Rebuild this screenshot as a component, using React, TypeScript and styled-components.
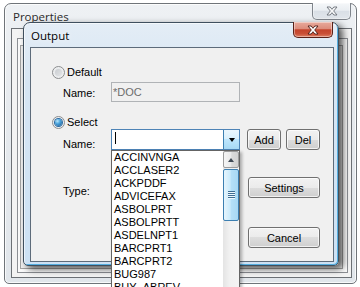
import React from 'react'
import styled, { createGlobalStyle } from 'styled-components'

const GlobalStyle = createGlobalStyle`
  html, body {
    margin: 0;
    padding: 0;
    background: #ffffff;
  }
  body {
    font-family: 'Liberation Sans', Arial, sans-serif;
    font-size: 11px;
    color: #000;
  }
  * {
    box-sizing: border-box;
  }
`

const Desktop = styled.div`
  position: relative;
  width: 360px;
  height: 287px;
  overflow: hidden;
  background: #fff;
`

/* ---------- window chrome ---------- */

const PropertiesWindow = styled.div`
  position: absolute;
  left: 4px;
  top: 3px;
  width: 353px;
  height: 281px;
  display: flex;
  flex-direction: column;
  border: 1px solid #6f7479;
  border-radius: 7px 7px 5px 5px;
  background: linear-gradient(180deg, #eef1f4 0%, #e6eaee 40%, #e1e6eb 100%);
  box-shadow: inset 0 0 0 1px rgba(255, 255, 255, 0.75);
`

const OutputWindow = styled.div`
  position: absolute;
  left: 23px;
  top: 22px;
  width: 316px;
  height: 244px;
  display: flex;
  flex-direction: column;
  border: 1px solid #3f4f5e;
  border-radius: 7px 7px 5px 5px;
  background: linear-gradient(180deg, #e4edf6 0%, #d6e5f3 25%, #cce1f4 100%);
  box-shadow: inset -1px -1px 0 #55aee0, inset 0 0 0 1px rgba(255, 255, 255, 0.6),
    4px 3px 7px rgba(0, 0, 0, 0.65);
  z-index: 2;
`

const TitleBar = styled.div<{ $height: number; $indent: number }>`
  position: relative;
  flex: none;
  height: ${p => p.$height}px;
  padding-left: ${p => p.$indent}px;
  display: flex;
  align-items: center;
`

const Caption = styled.span<{ $dim?: boolean }>`
  font-family: 'Open Sans', 'Noto Sans', sans-serif;
  font-size: 11.5px;
  color: ${p => (p.$dim ? '#2a2a2a' : '#000')};
  text-shadow: 0 0 6px rgba(255, 255, 255, 0.9);
`

const CloseButton = styled.div<{ $active?: boolean }>`
  position: absolute;
  top: -1px;
  right: 5px;
  width: ${p => (p.$active ? 40 : 39)}px;
  height: ${p => (p.$active ? 16 : 17)}px;
  display: flex;
  align-items: center;
  justify-content: center;
  border: 1px solid ${p => (p.$active ? '#5a2118' : '#7f858c')};
  border-top: none;
  border-radius: 0 0 5px 5px;
  background: ${p =>
    p.$active
      ? 'linear-gradient(180deg, #e8aa9c 0%, #dc8d7c 45%, #c4432b 52%, #c94f36 78%, #dd7f63 100%)'
      : 'linear-gradient(180deg, #f5f7f9 0%, #eaeef2 45%, #d9dfe6 52%, #e1e6eb 100%)'};
  box-shadow: inset 0 0 0 1px rgba(255, 255, 255, 0.4);
`

const CloseGlyph: React.FC<{ active?: boolean }> = ({ active }) => (
  <svg width="12" height="10" viewBox="0 0 12 10">
    <path
      d="M1 1h3.2L6 3.3 7.8 1H11L7.7 5 11 9H7.8L6 6.7 4.2 9H1l3.3-4z"
      fill={active ? '#ffffff' : '#f6f7f8'}
      stroke={active ? '#4a1a12' : '#6b7178'}
      strokeWidth="0.9"
      strokeLinejoin="round"
    />
  </svg>
)

/* ---------- properties background window ---------- */

const PropertiesBody = styled.div`
  flex: 1;
  display: flex;
  margin: 0 4px 5px 6px;
  padding: 9px 3px 4px 5px;
  border: 1px solid #6c7075;
  background: #f3f3f3;
`

const TabPanel = styled.div`
  flex: 1;
  display: flex;
  padding: 6px 4px 3px 2px;
  border: 1px solid #8c8f94;
  background: #fafafa;
`

const GroupPanel = styled.div`
  flex: 1;
  border: 1px solid #a3a3a3;
  background: #f0f0f0;
`

/* ---------- output dialog contents ---------- */

const DialogClient = styled.div`
  flex: none;
  height: 215px;
  margin: 0 4px 0 6px;
  display: flex;
  flex-direction: column;
  border: 1px solid #5d6b7a;
  background: #f0f0f0;
`

const OptionRow = styled.div<{ $gap: number }>`
  display: flex;
  align-items: center;
  gap: 2px;
  height: 13px;
  margin-top: ${p => p.$gap}px;
  padding-left: 21px;
  line-height: 13px;
`

const Radio = styled.span<{ $checked?: boolean }>`
  position: relative;
  flex: none;
  width: 13px;
  height: 13px;
  border-radius: 50%;
  border: 1px solid #8b8d8f;
  background: radial-gradient(circle at 50% 50%, #d2d5d9 0, #e6e8ea 45%, #fbfbfb 100%);

  &::after {
    content: '';
    position: absolute;
    left: 2px;
    top: 2px;
    width: 7px;
    height: 7px;
    border-radius: 50%;
    background: ${p =>
      p.$checked
        ? 'radial-gradient(circle at 35% 30%, #b9e7fb 0, #4aa4dd 40%, #15528c 100%)'
        : 'linear-gradient(135deg, #c9ccd0 0%, #e3e5e7 100%)'};
    box-shadow: ${p => (p.$checked ? '0 0 0 1px #2a6aa3' : 'none')};
  }
`

const FieldRow = styled.div<{ $gap: number }>`
  display: flex;
  align-items: flex-start;
  margin-top: ${p => p.$gap}px;
  padding-left: 32px;
`

const FieldLabel = styled.span<{ $drop: number }>`
  flex: none;
  width: 48px;
  line-height: 13px;
  padding-top: ${p => p.$drop}px;
`

const TextBox = styled.div`
  flex: none;
  width: 129px;
  height: 20px;
  display: flex;
  align-items: center;
  padding-left: 1px;
  border: 1px solid #b0b3b6;
  background: #f0f0f0;
  color: #6d6d6d;
`

const Combo = styled.div<{ $open?: boolean }>`
  position: relative;
  flex: none;
  width: 129px;
  height: 21px;
  display: flex;
  border: 1px solid ${p => (p.$open ? '#4d83b6' : '#abadb3')};
  background: #fff;
`

const ComboEdit = styled.div`
  flex: 1;
  padding: 2px 0 0 3px;
`

const Caret = styled.span`
  display: block;
  width: 1px;
  height: 12px;
  background: #000;
`

const DropButton = styled.div<{ $hot?: boolean }>`
  flex: none;
  width: 16px;
  display: flex;
  align-items: center;
  justify-content: center;
  border-left: 1px solid ${p => (p.$hot ? '#3c7fb1' : '#e3e3e3')};
  background: ${p =>
    p.$hot
      ? 'linear-gradient(180deg, #eaf6fd 0%, #d9f0fc 45%, #bee6fd 50%, #a7d9f5 100%)'
      : 'linear-gradient(180deg, #f2f2f2 0%, #ebebeb 50%, #dddddd 50%, #cfcfcf 100%)'};
`

const DownArrow = styled.span`
  width: 0;
  height: 0;
  border-left: 3.5px solid transparent;
  border-right: 3.5px solid transparent;
  border-top: 4px solid #000;
`

const DropList = styled.div`
  position: absolute;
  left: -1px;
  top: 20px;
  width: 129px;
  height: 150px;
  display: flex;
  border: 1px solid #646464;
  background: #fff;
  box-shadow: 2px 2px 3px rgba(0, 0, 0, 0.3);
  z-index: 5;
`

const ListItems = styled.ul`
  flex: 1;
  margin: 0;
  padding: 0;
  list-style: none;
  overflow: hidden;
`

const ListItem = styled.li`
  height: 13px;
  line-height: 13px;
  padding-left: 2px;
  white-space: nowrap;
`

const ScrollTrack = styled.div`
  flex: none;
  width: 16px;
  display: flex;
  flex-direction: column;
  background: linear-gradient(90deg, #e4e4e4 0%, #f1f1f1 40%, #f4f4f4 100%);
`

const ScrollArrow = styled.div`
  flex: none;
  height: 17px;
  display: flex;
  align-items: center;
  justify-content: center;
  border: 1px solid #9c9c9c;
  border-radius: 2px;
  background: linear-gradient(90deg, #f5f5f5 0%, #eaeaea 50%, #dadada 55%, #d2d2d2 100%);
`

const UpArrow = styled.span`
  width: 0;
  height: 0;
  border-left: 3.5px solid transparent;
  border-right: 3.5px solid transparent;
  border-bottom: 4px solid #404a55;
`

const ScrollThumb = styled.div`
  flex: none;
  height: 52px;
  margin-top: 1px;
  display: flex;
  align-items: center;
  justify-content: center;
  border: 1px solid #3c7fb1;
  border-radius: 2px;
  background: linear-gradient(90deg, #e6f5fd 0%, #c9eafb 45%, #b5e0f8 50%, #a7d8f4 100%);
`

const Grip = styled.span`
  width: 7px;
  height: 8px;
  background: repeating-linear-gradient(180deg, #3e6d93 0 1px, #eef8fd 1px 2px);
`

const ActionRow = styled.div<{ $gap: number }>`
  display: flex;
  align-items: flex-start;
  justify-content: flex-end;
  margin-top: ${p => p.$gap}px;
  padding-right: 13px;
`

const PushButton = styled.button<{ $width: number; $space?: number }>`
  flex: none;
  width: ${p => p.$width}px;
  height: 21px;
  margin-left: ${p => p.$space ?? 0}px;
  padding: 0;
  font-family: 'Liberation Sans', Arial, sans-serif;
  font-size: 11px;
  color: #000;
  border: 1px solid #707070;
  border-radius: 3px;
  background: linear-gradient(180deg, #f2f2f2 0%, #ebebeb 50%, #dddddd 50%, #cfcfcf 100%);
  box-shadow: inset 0 0 0 1px rgba(255, 255, 255, 0.7);
`

const printers = [
  'ACCINVNGA',
  'ACCLASER2',
  'ACKPDDF',
  'ADVICEFAX',
  'ASBOLPRT',
  'ASBOLPRTT',
  'ASDELNPT1',
  'BARCPRT1',
  'BARCPRT2',
  'BUG987',
  'BUY_ABREV',
]

const App: React.FC = () => {
  return (
    <Desktop>
      <GlobalStyle />
      <PropertiesWindow>
        <TitleBar $height={24} $indent={8}>
          <Caption $dim>Properties</Caption>
          <CloseButton>
            <CloseGlyph />
          </CloseButton>
        </TitleBar>
        <PropertiesBody>
          <TabPanel>
            <GroupPanel />
          </TabPanel>
        </PropertiesBody>
      </PropertiesWindow>

      <OutputWindow>
        <TitleBar $height={24} $indent={7}>
          <Caption>Output</Caption>
          <CloseButton $active>
            <CloseGlyph active />
          </CloseButton>
        </TitleBar>
        <DialogClient>
          <OptionRow $gap={18}>
            <Radio />
            <span>Default</span>
          </OptionRow>
          <FieldRow $gap={3}>
            <FieldLabel $drop={5}>Name:</FieldLabel>
            <TextBox>*DOC</TextBox>
          </FieldRow>

          <OptionRow $gap={14}>
            <Radio $checked />
            <span>Select</span>
          </OptionRow>
          <FieldRow $gap={0}>
            <FieldLabel $drop={9}>Name:</FieldLabel>
            <Combo $open>
              <ComboEdit>
                <Caret />
              </ComboEdit>
              <DropButton $hot>
                <DownArrow />
              </DropButton>
              <DropList>
                <ListItems>
                  {printers.map(name => (
                    <ListItem key={name}>{name}</ListItem>
                  ))}
                </ListItems>
                <ScrollTrack>
                  <ScrollArrow>
                    <UpArrow />
                  </ScrollArrow>
                  <ScrollThumb>
                    <Grip />
                  </ScrollThumb>
                </ScrollTrack>
              </DropList>
            </Combo>
            <PushButton $width={34} $space={7}>Add</PushButton>
            <PushButton $width={34} $space={5}>Del</PushButton>
          </FieldRow>

          <FieldRow $gap={26}>
            <FieldLabel $drop={8}>Type:</FieldLabel>
            <Combo>
              <ComboEdit />
              <DropButton>
                <DownArrow />
              </DropButton>
            </Combo>
            <PushButton $width={72} $space={8}>Settings</PushButton>
          </FieldRow>

          <ActionRow $gap={29}>
            <PushButton $width={72}>Cancel</PushButton>
          </ActionRow>
        </DialogClient>
      </OutputWindow>
    </Desktop>
  )
}

export default App
